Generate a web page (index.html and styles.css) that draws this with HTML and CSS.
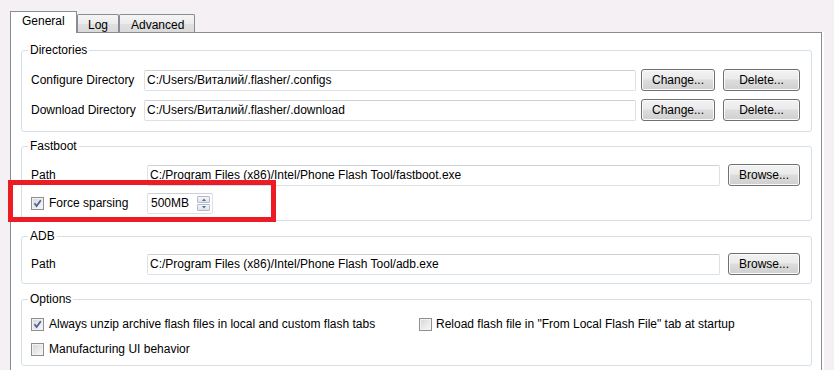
FILE: index.html
```html
<!DOCTYPE html>
<html>
<head>
<meta charset="utf-8">
<link rel="stylesheet" href="styles.css">
</head>
<body>
<div class="window">
  <div class="tabs">
    <div class="tab tab-active tab-general">General</div>
    <div class="tab tab-log">Log</div>
    <div class="tab tab-advanced">Advanced</div>
  </div>
  <div class="pane">
    <fieldset class="group group-dirs">
      <legend>Directories</legend>
      <div class="rows rows-dirs">
        <div class="row">
          <span class="label label-dirs">Configure Directory</span>
          <div class="edit">C:/Users/Виталий/.flasher/.configs</div>
          <button class="btn btn-change">Change...</button>
          <button class="btn btn-delete">Delete...</button>
        </div>
        <div class="row">
          <span class="label label-dirs">Download Directory</span>
          <div class="edit">C:/Users/Виталий/.flasher/.download</div>
          <button class="btn btn-change">Change...</button>
          <button class="btn btn-delete">Delete...</button>
        </div>
      </div>
    </fieldset>

    <fieldset class="group group-fast">
      <legend>Fastboot</legend>
      <div class="rows rows-fast">
        <div class="row">
          <span class="label label-path">Path</span>
          <div class="edit edit-wide">C:/Program Files (x86)/Intel/Phone Flash Tool/fastboot.exe</div>
          <button class="btn btn-browse">Browse...</button>
        </div>
        <div class="row">
          <span class="label label-path check-label">
            <span class="check checked"><svg viewBox="0 0 11 11" width="11" height="11"><path d="M2.5 5.2 L4.6 8 L8.8 2.2" fill="none" stroke="#4b5f96" stroke-width="1.7"/></svg></span>
            Force sparsing
          </span>
          <div class="spin">
            <span class="spin-text">500MB</span>
            <span class="spin-btns">
              <span class="spin-btn"><svg viewBox="0 0 10 5" width="10" height="5"><path d="M3 4 L5 1.5 L7 4 Z" fill="#4e6a9c"/></svg></span>
              <span class="spin-btn"><svg viewBox="0 0 10 5" width="10" height="5"><path d="M3 1 L5 3.5 L7 1 Z" fill="#4e6a9c"/></svg></span>
            </span>
          </div>
        </div>
      </div>
    </fieldset>

    <fieldset class="group group-adb">
      <legend>ADB</legend>
      <div class="rows rows-adb">
        <div class="row">
          <span class="label label-path">Path</span>
          <div class="edit edit-wide">C:/Program Files (x86)/Intel/Phone Flash Tool/adb.exe</div>
          <button class="btn btn-browse">Browse...</button>
        </div>
      </div>
    </fieldset>

    <fieldset class="group group-opts">
      <legend>Options</legend>
      <div class="opts">
        <span class="opt">
          <span class="check checked"><svg viewBox="0 0 11 11" width="11" height="11"><path d="M2.5 5.2 L4.6 8 L8.8 2.2" fill="none" stroke="#4b5f96" stroke-width="1.7"/></svg></span>
          Always unzip archive flash files in local and custom flash tabs
        </span>
        <span class="opt">
          <span class="check"></span>
          Reload flash file in "From Local Flash File" tab at startup
        </span>
        <span class="opt">
          <span class="check"></span>
          Manufacturing UI behavior
        </span>
      </div>
    </fieldset>
  </div>
</div>
<div class="annotation"></div>
</body>
</html>
```

FILE: styles.css
```css
html, body {
  margin: 0;
  padding: 0;
}
body {
  background: #f4f0f4;
  font-family: "Liberation Sans", Arial, sans-serif;
  font-size: 12px;
  color: #000;
  width: 834px;
  height: 370px;
  overflow: hidden;
  position: relative;
}
.window {
  padding: 11px 0 0 10px;
}
.tabs {
  display: flex;
  align-items: flex-end;
  height: 21px;
}
.tab {
  box-sizing: border-box;
  border: 1px solid #898c95;
  border-bottom: none;
  height: 18px;
  padding-left: 10px;
  line-height: 17px;
  padding-top: 2px;
  background: linear-gradient(#f5f5f5, #ebebeb 50%, #e0e0e0 51%, #dadada);
  border-radius: 2px 2px 0 0;
}
.tab-active {
  height: 22px;
  margin-bottom: -1px;
  background: #fff;
  position: relative;
  z-index: 1;
  padding-top: 1px;
  padding-left: 11px;
  border-radius: 0;
}
.tab-general { width: 67px; }
.tab-log { width: 42px; }
.tab-advanced { width: 76px; padding-left: 11px; }

.pane {
  box-sizing: border-box;
  width: 812px;
  height: 338px;
  background: #fff;
  border: 1px solid #898c95;
  border-bottom: none;
  box-shadow: 2px 0 0 #fff;
  padding: 10px 9px 0 10px;
  overflow: hidden;
}
.group {
  margin: 0;
  padding: 0;
  border: 1px solid #d5dfe5;
  border-radius: 3px;
  min-width: 0;
}
.group legend {
  margin-left: 6px;
  padding: 0 2px;
  line-height: 14px;
  height: 14px;
}
.group + .group {
  margin-top: 7px;
}
.group-adb, .group-opts {
  margin-top: 8px !important;
}
.rows {
  display: flex;
  flex-direction: column;
  padding: 0 11px 0 9px;
}
.rows-dirs { padding-top: 12px; padding-bottom: 10px; gap: 8px; }
.rows-fast { padding-top: 11px; padding-bottom: 6px; gap: 6px; }
.rows-adb { padding-top: 10px; padding-bottom: 8px; }

.row {
  display: flex;
  align-items: center;
  height: 22px;
}
.label {
  flex: none;
  white-space: nowrap;
}
.label-dirs { width: 113px; }
.label-path { width: 116px; }
.check-label {
  display: flex;
  align-items: center;
  gap: 5px;
}
.edit {
  box-sizing: border-box;
  flex: 1;
  height: 21px;
  border: 1px solid #dde1e6;
  border-top-color: #cdd1d6;
  border-radius: 2px;
  padding-left: 2px;
  line-height: 19px;
  white-space: nowrap;
  overflow: hidden;
}
.btn {
  box-sizing: border-box;
  flex: none;
  height: 22px;
  border: 1px solid #707070;
  border-radius: 3px;
  background: linear-gradient(#f2f2f2, #ebebeb 45%, #dddddd 50%, #cfcfcf);
  box-shadow: inset 0 0 0 1px #fbfbfb;
  font-family: "Liberation Sans", Arial, sans-serif;
  font-size: 12px;
  color: #000;
  padding: 0;
  margin: 0;
  text-align: center;
}
.btn-change { width: 74px; margin-left: 5px; }
.btn-delete { width: 77px; margin-left: 8px; }
.btn-browse { width: 72px; margin-left: 8px; }

.check {
  box-sizing: border-box;
  flex: none;
  width: 13px;
  height: 13px;
  border: 1px solid #8f8f8f;
  background: linear-gradient(135deg, #d6d6d6, #f9f9f9);
  box-shadow: inset 0 0 0 1px #f2f2f2;
  display: inline-flex;
  align-items: center;
  justify-content: center;
}
.check svg { display: block; }

.spin {
  box-sizing: border-box;
  width: 66px;
  height: 21px;
  border: 1px solid #dde1e6;
  border-top-color: #cdd1d6;
  border-radius: 2px;
  display: flex;
  align-items: center;
  justify-content: space-between;
  padding: 0 1px 0 3px;
}
.spin-btns {
  display: flex;
  flex-direction: column;
  gap: 1px;
  margin-right: 1px;
}
.spin-btn {
  box-sizing: border-box;
  width: 13px;
  height: 7px;
  border: 1px solid #b4bac8;
  border-radius: 1px;
  background: linear-gradient(#f4f6fa, #dfe3ec);
  display: flex;
  align-items: center;
  justify-content: center;
}
.spin-btn svg { display: block; }

.opts {
  display: grid;
  grid-template-columns: 388px 1fr;
  row-gap: 9px;
  padding: 10px 9px 8px 9px;
}
.opt {
  display: flex;
  align-items: center;
  gap: 5px;
  height: 16px;
  white-space: nowrap;
}
.opt:nth-child(2) {
  gap: 4px;
}

.annotation {
  position: absolute;
  left: 8px;
  top: 180px;
  width: 268px;
  height: 42px;
  box-sizing: border-box;
  border: 5px solid #ed1c24;
}
```
